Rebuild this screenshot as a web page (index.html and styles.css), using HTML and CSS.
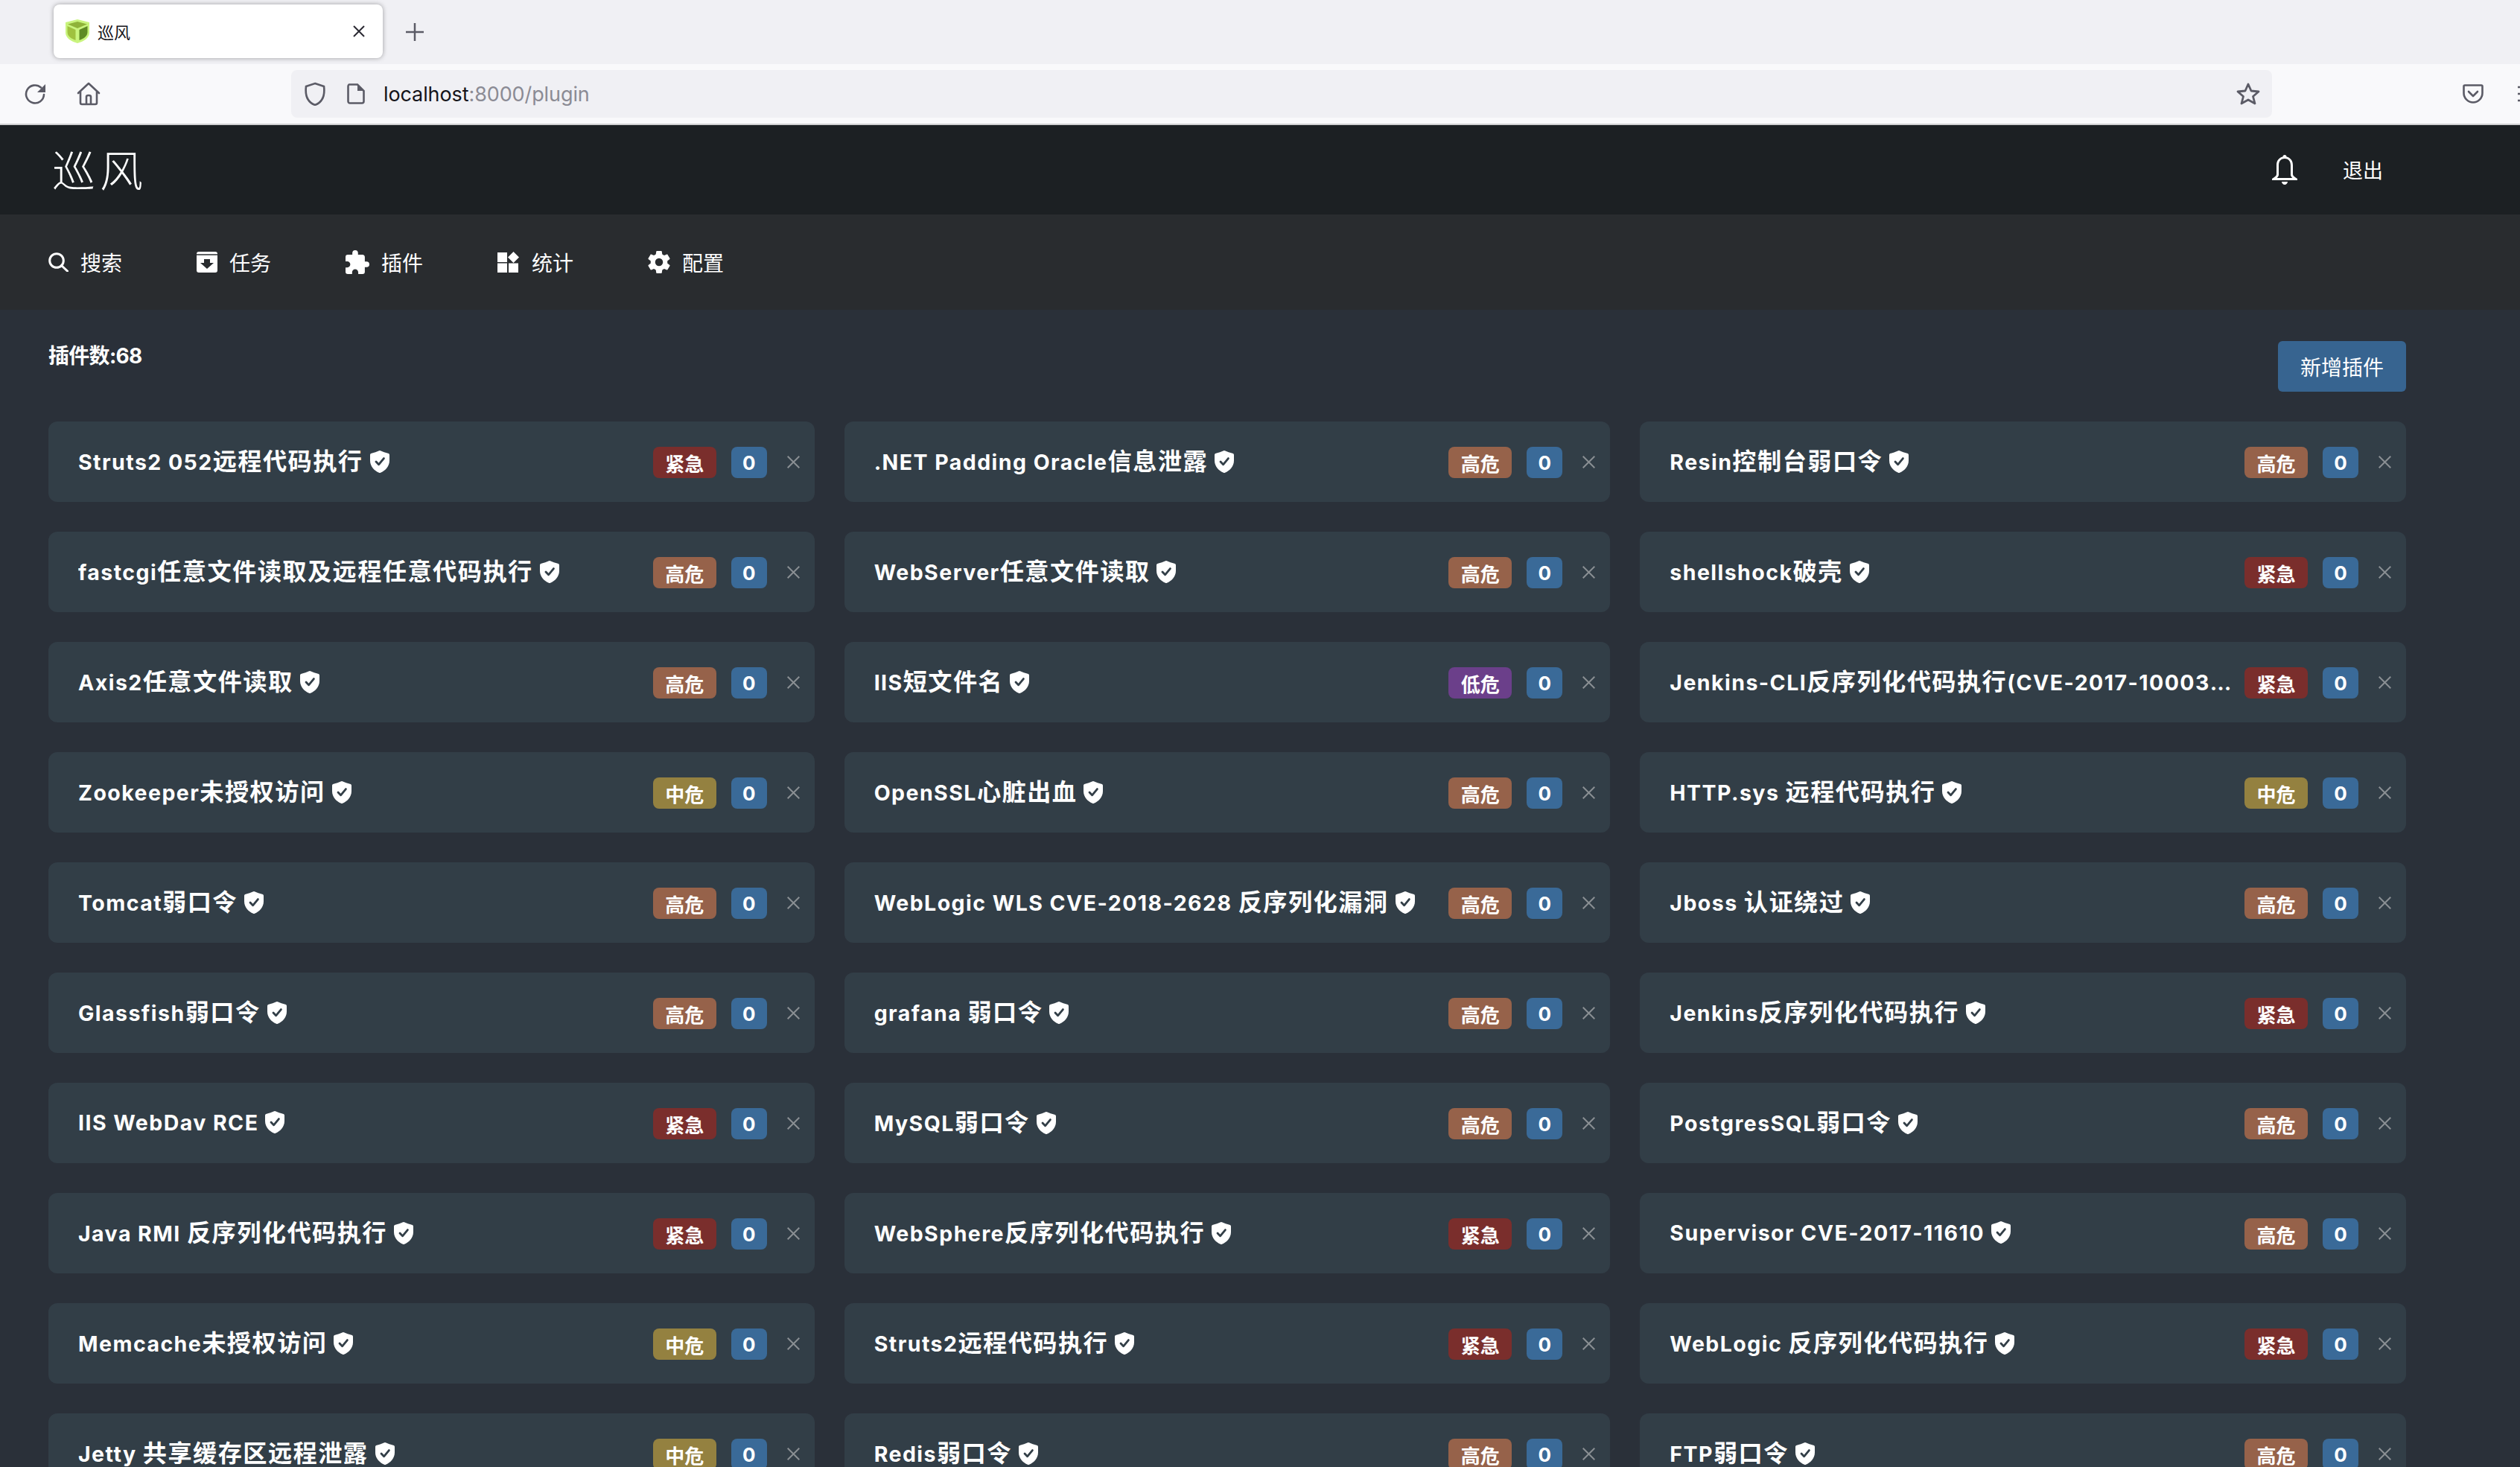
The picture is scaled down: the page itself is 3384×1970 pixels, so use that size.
FILE: index.html
```html
<!DOCTYPE html>
<html lang="zh-CN">
<head>
<meta charset="utf-8">
<title>巡风</title>
<link rel="stylesheet" href="styles.css">
</head>
<body>
<svg class="defs" width="0" height="0" aria-hidden="true">
  <symbol id="verified" viewBox="0 0 26 30">
    <path fill="#fff" d="M13 0c1 0 2 .8 4 1.6 2.400 1 5 1.800 7 2.100 1.300.2 2 1 2 2.200v7.600c0 8-6 13.800-12 16.200-.7.300-1.300.3-2 0C6 27.300 0 21.500 0 13.500V5.900c0-1.200.7-2 2-2.200 2-.3 4.600-1.100 7-2.100C11 .8 12 0 13 0z"/>
    <path fill="none" stroke="#323e47" stroke-width="2.800" stroke-linecap="round" stroke-linejoin="round" d="M8 15l3.600 3.800L18.400 10.600"/>
  </symbol>
  <symbol id="remove" viewBox="0 0 17 17">
    <path fill="none" stroke="#8a8f93" stroke-width="2" d="M.7.7l15.600 15.600M16.300.7L.7 16.300"/>
  </symbol>
</svg>
<div class="page">
  <div class="tabstrip">
    <div class="tab">
      <svg class="favicon" viewBox="0 0 32 32">
        <path fill="#c9f47e" d="M16 0l16 4v14c0 7-8 12-16 14C8 30 0 25 0 18V4z"/>
        <path fill="#8fb339" d="M16 3l13 3.500L16 12 3 6.500z"/>
        <path fill="#9fc13f" d="M2.500 9l11 5v14C8 26 2.500 23 2.500 17z"/>
        <path fill="#5f8a25" d="M29.500 9l-11 5v14c5.500-2 11-5 11-11z"/>
      </svg>
      <span class="tab-title">巡风</span>
      <svg class="tab-close" viewBox="0 0 16 16"><path d="M1 1l14 14M15 1L1 15"/></svg>
    </div>
    <svg class="tab-new" viewBox="0 0 24 24"><path d="M12 0v24M0 12h24"/></svg>
  </div>
  <div class="toolbar">
    <svg class="tool reload" viewBox="0 0 30 30"><path d="M26 15a12 12 0 1 1-4-9.500"/><path class="solid" d="M28 1v11H17z"/></svg>
    <svg class="tool home" viewBox="0 0 32 32"><path d="M2 15L16 2l14 13M5 13v15c0 1 .6 2 2 2h18c1.400 0 2-1 2-2V13M13 30V20c0-1 1-2 3-2s3 1 3 2v10"/></svg>
    <div class="urlbar">
      <svg class="url-shield" viewBox="0 0 32 32"><path d="M16 2l12 4c1 8 1 20-12 25C3 26 3 14 4 6z"/></svg>
      <svg class="url-page" viewBox="0 0 24 28"><path d="M3 1.500h11L22.500 10v14c0 1.500-1 2.500-2.500 2.500H4c-1.500 0-2.500-1-2.500-2.500V4c0-1.500 1-2.500 1.500-2.500z"/><path class="solid" d="M14 1.500L22.500 10H14z"/></svg>
      <span class="url-text"><span class="url-host">localhost</span>:8000/plugin</span>
      <svg class="url-star" viewBox="0 0 32 30"><path d="M16 2l4 9 10 1-7.500 6.500L25 28l-9-5-9 5 2.500-9.500L2 12l10-1z"/></svg>
    </div>
    <svg class="tool pocket" viewBox="0 0 28 26"><path d="M3 1.500h22c1 0 1.500 .5 1.500 1.500v9c0 7-6 12.500-12.500 12.500S1.500 19 1.500 12V3c0-1 .5-1.500 1.500-1.500zM8 10l6 6 6-6"/></svg>
    <svg class="tool menu" viewBox="0 0 28 24"><path d="M0 3h28M0 12h28M0 21h28"/></svg>
  </div>
  <header class="topbar">
    <div class="logo">巡风</div>
    <div class="top-actions">
      <svg class="bell" viewBox="0 0 34 40"><path d="M17 0c1.500 0 2.500 1 2.600 2.500C25 3.800 28 8 28 14v12c0 2 2 3.500 6 6v2H0v-2c4-2.500 6-4 6-6V14C6 8 9 3.800 14.400 2.500 14.500 1 15.500 0 17 0zM9 14v12.500c0 1.500-.8 3-2.500 4.500h21c-1.700-1.500-2.500-3-2.500-4.500V14c0-6-3.500-9-8-9s-8 3-8 9zM13 36h8c0 2-2 4-4 4s-4-2-4-4z"/></svg>
      <span class="logout">退出</span>
    </div>
  </header>
  <nav class="navbar">
    <a class="nav-item"><svg class="nav-icon i-search" viewBox="0 0 27 26"><circle cx="11" cy="11" r="9.300"/><path d="M17.500 17.500l8 7.500"/></svg>搜索</a>
    <a class="nav-item"><svg class="nav-icon i-task" viewBox="0 0 28 28"><path class="white" d="M3 0h22c2 0 3 1 3 3v22c0 2-1 3-3 3H3c-2 0-3-1-3-3V3c0-2 1-3 3-3z"/><path class="dark-line" d="M0 4h28"/><path class="dark" d="M10 10h8v5h5l-9 8-9-8h5z"/></svg>任务</a>
    <a class="nav-item"><svg class="nav-icon i-puzzle" viewBox="2 1 21 21"><path d="M20.500,11H19V7C19,5.890 18.100,5 17,5H13V3.500A2.500,2.500 0 0,0 10.500,1A2.500,2.500 0 0,0 8,3.500V5H4A2,2 0 0,0 2,7V10.800H3.500C5,10.800 6.200,12 6.200,13.500C6.200,15 5,16.200 3.500,16.200H2V20A2,2 0 0,0 4,22H7.800V20.500C7.800,19 9,17.800 10.500,17.800C12,17.800 13.200,19 13.200,20.500V22H17A2,2 0 0,0 19,20V16H20.500A2.500,2.500 0 0,0 23,13.500A2.500,2.500 0 0,0 20.500,11Z"/></svg>插件</a>
    <a class="nav-item"><svg class="nav-icon i-stats" viewBox="0 0 30 28"><path d="M0 1h13v13H0zM0 15.500h13V28H0zM15 15.500h13V28H15zM21.500 0L29 7.500 21.500 15 14 7.500z"/></svg>统计</a>
    <a class="nav-item"><svg class="nav-icon i-gear" viewBox="2.200 2 19.600 20"><path d="M12,15.500A3.500,3.500 0 0,1 8.500,12A3.500,3.500 0 0,1 12,8.500A3.500,3.500 0 0,1 15.500,12A3.500,3.500 0 0,1 12,15.500M19.430,12.970C19.470,12.650 19.500,12.330 19.500,12C19.500,11.670 19.470,11.340 19.430,11L21.540,9.370C21.730,9.220 21.780,8.950 21.660,8.730L19.660,5.270C19.540,5.050 19.270,4.960 19.050,5.050L16.560,6.050C16.040,5.660 15.500,5.320 14.870,5.070L14.500,2.420C14.460,2.180 14.250,2 14,2H10C9.750,2 9.540,2.180 9.500,2.420L9.130,5.070C8.500,5.320 7.960,5.660 7.440,6.050L4.950,5.050C4.730,4.960 4.460,5.050 4.340,5.270L2.340,8.730C2.210,8.950 2.270,9.220 2.460,9.370L4.570,11C4.530,11.340 4.500,11.670 4.500,12C4.500,12.330 4.530,12.650 4.570,12.970L2.460,14.630C2.270,14.780 2.210,15.050 2.340,15.270L4.340,18.730C4.460,18.950 4.730,19.030 4.950,18.950L7.440,17.940C7.960,18.340 8.500,18.680 9.130,18.930L9.500,21.580C9.540,21.820 9.750,22 10,22H14C14.250,22 14.460,21.820 14.500,21.580L14.870,18.930C15.500,18.670 16.040,18.340 16.560,17.940L19.050,18.950C19.270,19.030 19.540,18.950 19.660,18.730L21.660,15.270C21.780,15.050 21.730,14.780 21.540,14.630L19.430,12.970Z"/></svg>配置</a>
  </nav>
  <main class="content">
    <div class="content-head">
      <div class="plugin-count">插件数:68</div>
      <button class="add-btn">新增插件</button>
    </div>
    <div class="grid">
      <div class="card"><div class="name">Struts2 052<span class="zh">远程代码执行</span><svg class="check"><use href="#verified"/></svg></div><span class="sev crit">紧急</span><span class="num">0</span><svg class="del"><use href="#remove"/></svg></div>
      <div class="card"><div class="name">.NET Padding Oracle<span class="zh">信息泄露</span><svg class="check"><use href="#verified"/></svg></div><span class="sev high">高危</span><span class="num">0</span><svg class="del"><use href="#remove"/></svg></div>
      <div class="card"><div class="name">Resin<span class="zh">控制台弱口令</span><svg class="check"><use href="#verified"/></svg></div><span class="sev high">高危</span><span class="num">0</span><svg class="del"><use href="#remove"/></svg></div>

      <div class="card"><div class="name">fastcgi<span class="zh">任意文件读取及远程任意代码执行</span><svg class="check"><use href="#verified"/></svg></div><span class="sev high">高危</span><span class="num">0</span><svg class="del"><use href="#remove"/></svg></div>
      <div class="card"><div class="name">WebServer<span class="zh">任意文件读取</span><svg class="check"><use href="#verified"/></svg></div><span class="sev high">高危</span><span class="num">0</span><svg class="del"><use href="#remove"/></svg></div>
      <div class="card"><div class="name">shellshock<span class="zh">破壳</span><svg class="check"><use href="#verified"/></svg></div><span class="sev crit">紧急</span><span class="num">0</span><svg class="del"><use href="#remove"/></svg></div>

      <div class="card"><div class="name">Axis2<span class="zh">任意文件读取</span><svg class="check"><use href="#verified"/></svg></div><span class="sev high">高危</span><span class="num">0</span><svg class="del"><use href="#remove"/></svg></div>
      <div class="card"><div class="name">IIS<span class="zh">短文件名</span><svg class="check"><use href="#verified"/></svg></div><span class="sev low">低危</span><span class="num">0</span><svg class="del"><use href="#remove"/></svg></div>
      <div class="card"><div class="name">Jenkins-CLI<span class="zh">反序列化代码执行</span>(CVE-2017-1000353)<svg class="check"><use href="#verified"/></svg></div><span class="sev crit">紧急</span><span class="num">0</span><svg class="del"><use href="#remove"/></svg></div>

      <div class="card"><div class="name">Zookeeper<span class="zh">未授权访问</span><svg class="check"><use href="#verified"/></svg></div><span class="sev mid">中危</span><span class="num">0</span><svg class="del"><use href="#remove"/></svg></div>
      <div class="card"><div class="name">OpenSSL<span class="zh">心脏出血</span><svg class="check"><use href="#verified"/></svg></div><span class="sev high">高危</span><span class="num">0</span><svg class="del"><use href="#remove"/></svg></div>
      <div class="card"><div class="name">HTTP.sys <span class="zh">远程代码执行</span><svg class="check"><use href="#verified"/></svg></div><span class="sev mid">中危</span><span class="num">0</span><svg class="del"><use href="#remove"/></svg></div>

      <div class="card"><div class="name">Tomcat<span class="zh">弱口令</span><svg class="check"><use href="#verified"/></svg></div><span class="sev high">高危</span><span class="num">0</span><svg class="del"><use href="#remove"/></svg></div>
      <div class="card"><div class="name">WebLogic WLS CVE-2018-2628 <span class="zh">反序列化漏洞</span><svg class="check"><use href="#verified"/></svg></div><span class="sev high">高危</span><span class="num">0</span><svg class="del"><use href="#remove"/></svg></div>
      <div class="card"><div class="name">Jboss <span class="zh">认证绕过</span><svg class="check"><use href="#verified"/></svg></div><span class="sev high">高危</span><span class="num">0</span><svg class="del"><use href="#remove"/></svg></div>

      <div class="card"><div class="name">Glassfish<span class="zh">弱口令</span><svg class="check"><use href="#verified"/></svg></div><span class="sev high">高危</span><span class="num">0</span><svg class="del"><use href="#remove"/></svg></div>
      <div class="card"><div class="name">grafana <span class="zh">弱口令</span><svg class="check"><use href="#verified"/></svg></div><span class="sev high">高危</span><span class="num">0</span><svg class="del"><use href="#remove"/></svg></div>
      <div class="card"><div class="name">Jenkins<span class="zh">反序列化代码执行</span><svg class="check"><use href="#verified"/></svg></div><span class="sev crit">紧急</span><span class="num">0</span><svg class="del"><use href="#remove"/></svg></div>

      <div class="card"><div class="name">IIS WebDav RCE<svg class="check"><use href="#verified"/></svg></div><span class="sev crit">紧急</span><span class="num">0</span><svg class="del"><use href="#remove"/></svg></div>
      <div class="card"><div class="name">MySQL<span class="zh">弱口令</span><svg class="check"><use href="#verified"/></svg></div><span class="sev high">高危</span><span class="num">0</span><svg class="del"><use href="#remove"/></svg></div>
      <div class="card"><div class="name">PostgresSQL<span class="zh">弱口令</span><svg class="check"><use href="#verified"/></svg></div><span class="sev high">高危</span><span class="num">0</span><svg class="del"><use href="#remove"/></svg></div>

      <div class="card"><div class="name">Java RMI <span class="zh">反序列化代码执行</span><svg class="check"><use href="#verified"/></svg></div><span class="sev crit">紧急</span><span class="num">0</span><svg class="del"><use href="#remove"/></svg></div>
      <div class="card"><div class="name">WebSphere<span class="zh">反序列化代码执行</span><svg class="check"><use href="#verified"/></svg></div><span class="sev crit">紧急</span><span class="num">0</span><svg class="del"><use href="#remove"/></svg></div>
      <div class="card"><div class="name">Supervisor CVE-2017-11610<svg class="check"><use href="#verified"/></svg></div><span class="sev high">高危</span><span class="num">0</span><svg class="del"><use href="#remove"/></svg></div>

      <div class="card"><div class="name">Memcache<span class="zh">未授权访问</span><svg class="check"><use href="#verified"/></svg></div><span class="sev mid">中危</span><span class="num">0</span><svg class="del"><use href="#remove"/></svg></div>
      <div class="card"><div class="name">Struts2<span class="zh">远程代码执行</span><svg class="check"><use href="#verified"/></svg></div><span class="sev crit">紧急</span><span class="num">0</span><svg class="del"><use href="#remove"/></svg></div>
      <div class="card"><div class="name">WebLogic <span class="zh">反序列化代码执行</span><svg class="check"><use href="#verified"/></svg></div><span class="sev crit">紧急</span><span class="num">0</span><svg class="del"><use href="#remove"/></svg></div>

      <div class="card"><div class="name">Jetty <span class="zh">共享缓存区远程泄露</span><svg class="check"><use href="#verified"/></svg></div><span class="sev mid">中危</span><span class="num">0</span><svg class="del"><use href="#remove"/></svg></div>
      <div class="card"><div class="name">Redis<span class="zh">弱口令</span><svg class="check"><use href="#verified"/></svg></div><span class="sev high">高危</span><span class="num">0</span><svg class="del"><use href="#remove"/></svg></div>
      <div class="card"><div class="name">FTP<span class="zh">弱口令</span><svg class="check"><use href="#verified"/></svg></div><span class="sev high">高危</span><span class="num">0</span><svg class="del"><use href="#remove"/></svg></div>
    </div>
  </main>
</div>
</body>
</html>
```
FILE: styles.css
```css
* { box-sizing: border-box; }
html, body { margin: 0; height: 100%; overflow: hidden; }
body { font-family: Inter, "Noto Sans CJK SC", sans-serif; color: #fff; background: #2a3039; }
.defs { position: absolute; }
.page { height: 100vh; display: flex; flex-direction: column; overflow: hidden; }

/* browser chrome */
.tabstrip { height: 86px; flex: none; background: #f0f0f4; display: flex; align-items: flex-start; padding: 6px 0 0 72px; }
.tab { width: 442px; height: 72px; background: #fff; border-radius: 8px; box-shadow: 0 0 6px rgba(0,0,0,.35); display: flex; align-items: center; padding: 0 24px 0 16px; color: #15141a; }
.favicon { width: 32px; height: 32px; flex: none; }
.tab-title { margin-left: 11px; font-size: 22px; flex: 1; font-family: "Noto Sans CJK SC", sans-serif; }
.tab-close { width: 16px; height: 16px; fill: none; stroke: #2b2a33; stroke-width: 2; }
.tab-new { width: 24px; height: 24px; margin: 25px 0 0 31px; fill: none; stroke: #5b5b66; stroke-width: 2.500; }
.toolbar { height: 80px; flex: none; background: #f9f9fb; display: flex; align-items: center; padding-left: 33px; overflow: hidden; }
.tool { flex: none; fill: none; stroke: #5b5b66; stroke-width: 2.600; stroke-linecap: round; stroke-linejoin: round; }
.tool .solid, .url-page .solid { fill: #5b5b66; stroke: none; }
.reload { width: 30px; height: 30px; margin-top: 2px; }
.home { width: 32px; height: 32px; margin-left: 40px; }
.urlbar { flex: none; margin-left: 256px; width: 2660px; height: 64px; background: #f0f0f4; border-radius: 8px; display: flex; align-items: center; padding-left: 16px; }
.url-shield { width: 32px; height: 32px; fill: none; stroke: #5b5b66; stroke-width: 2.600; }
.url-page { width: 24px; height: 28px; margin-left: 27px; fill: none; stroke: #5b5b66; stroke-width: 2.600; }
.url-text { margin-left: 25px; font-size: 27px; letter-spacing: -.1px; color: #8b8b94; flex: 1; }
.url-host { color: #15141a; }
.url-star { width: 32px; height: 30px; margin-right: 16px; fill: none; stroke: #5b5b66; stroke-width: 2.800; stroke-linejoin: round; }
.pocket { width: 28px; height: 26px; margin-left: 256px; }
.menu { width: 28px; height: 24px; margin-left: 46px; }

/* app header */
.topbar { height: 122px; flex: none; border-top: 2px solid #cfcfd1; background: #1c2023; display: flex; align-items: center; justify-content: space-between; padding: 0 184px 0 70px; }
.logo { font-size: 58px; letter-spacing: 6px; font-weight: 300; font-family: "Noto Sans CJK SC", serif; line-height: 1; margin-bottom: 4px; }
.top-actions { display: flex; align-items: center; gap: 61px; }
.bell { width: 34px; height: 40px; fill: #fff; }
.logout { font-size: 27px; font-family: "Noto Sans CJK SC", sans-serif; margin-bottom: 2px; }
.navbar { height: 128px; flex: none; background: #292c2f; display: flex; align-items: center; gap: 100px; padding-left: 65px; }
.nav-item { display: flex; align-items: center; gap: 16px; font-size: 28px; font-family: "Noto Sans CJK SC", sans-serif; color: #fff; }
.nav-icon { flex: none; fill: #fff; }
.i-search { width: 27px; height: 26px; fill: none; stroke: #fff; stroke-width: 3; stroke-linecap: round; }
.i-task { width: 28px; height: 28px; }
.i-task .white { fill: #fff; }
.i-task .dark { fill: #292c2f; }
.i-task .dark-line { stroke: #292c2f; stroke-width: 1.500; fill: none; }
.i-puzzle { width: 32px; height: 32px; }
.i-stats { width: 30px; height: 28px; }
.i-gear { width: 30px; height: 30px; }

/* content */
.content { flex: 1; min-height: 0; padding: 42px 153px 0 65px; overflow: hidden; }
.content-head { display: flex; justify-content: space-between; align-items: flex-start; margin-bottom: 40px; }
.plugin-count { font-size: 28px; font-weight: 700; line-height: 40px; letter-spacing: -.7px; }
.add-btn { width: 172px; height: 68px; border: 0; border-radius: 6px; background: #376490; color: #fff; font: 400 28px "Noto Sans CJK SC", sans-serif; padding: 0; }
.grid { display: grid; grid-template-columns: repeat(3, 1fr); grid-auto-rows: 108px; gap: 40px; }
.card { min-width: 0; background: #323e47; border-radius: 12px; display: flex; align-items: center; padding: 0 20px 0 40px; }
.name { flex: 1; min-width: 0; font-size: 28.500px; font-weight: 700; letter-spacing: 1.450px; line-height: 44px; white-space: nowrap; overflow: hidden; text-overflow: ellipsis; margin-right: 14px; }
.zh { font-size: 32.200px; }
.check { width: 26px; height: 30px; margin-left: 9px; vertical-align: -4px; }
.sev, .num { flex: none; height: 42px; border-radius: 8px; display: flex; align-items: center; justify-content: center; font-size: 26px; font-weight: 700; margin-top: 2px; }
.sev { width: 85px; }
.num { width: 48px; margin-left: 20px; background: #3a6a98; }
.crit { background: #7a2e2c; }
.high { background: #96624a; }
.mid { background: #948140; }
.low { background: #6b3f8a; }
.del { flex: none; width: 17px; height: 17px; margin-left: 27px; }
```
